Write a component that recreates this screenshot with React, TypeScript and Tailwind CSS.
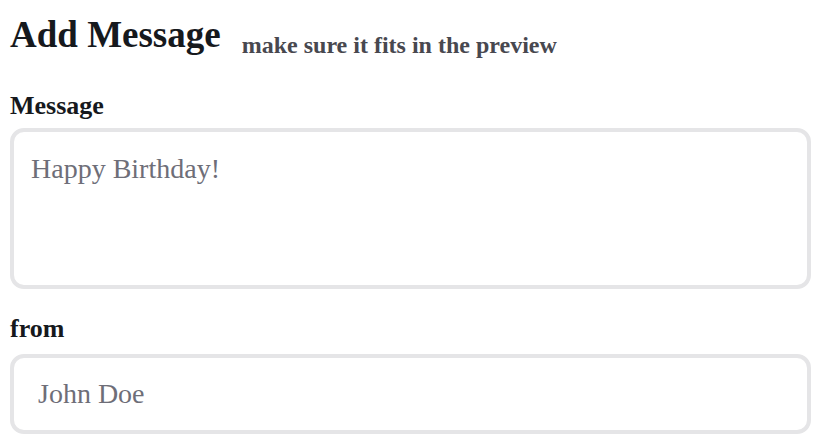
export default function App() {
  return (
    <div className="min-h-screen bg-white pl-[10px] pr-[11px] pt-[16px] font-['Liberation_Serif',_'Times_New_Roman',_serif]">
      <div className="flex items-start">
        <h1 className="text-[37px] leading-[37px] font-bold text-[#16191d]">Add Message</h1>
        <span className="ml-[21px] mt-[17px] text-[24px] leading-[24px] font-bold text-[#48484f]">
          make sure it fits in the preview
        </span>
      </div>

      <label className="block mt-[36px] text-[26px] leading-[26px] font-bold text-[#16191d]">Message</label>
      <textarea
        placeholder="Happy Birthday!"
        className="mt-[9px] block w-full h-[161px] resize-none rounded-[14px] border-4 border-[#e5e5e7] px-[17px] pt-[21px] text-[28px] leading-[32px] font-['Liberation_Serif',_serif] text-gray-900 placeholder:text-[#6e6e78] focus:outline-none"
      />

      <label className="block mt-[27px] text-[26px] leading-[26px] font-bold text-[#16191d]">from</label>
      <input
        type="text"
        placeholder="John Doe"
        className="mt-[12px] block w-full h-[80px] rounded-[14px] border-4 border-[#e5e5e7] pl-[24px] pr-4 text-[28px] font-['Liberation_Serif',_serif] text-gray-900 placeholder:text-[#6e6e78] focus:outline-none"
      />
    </div>
  );
}
